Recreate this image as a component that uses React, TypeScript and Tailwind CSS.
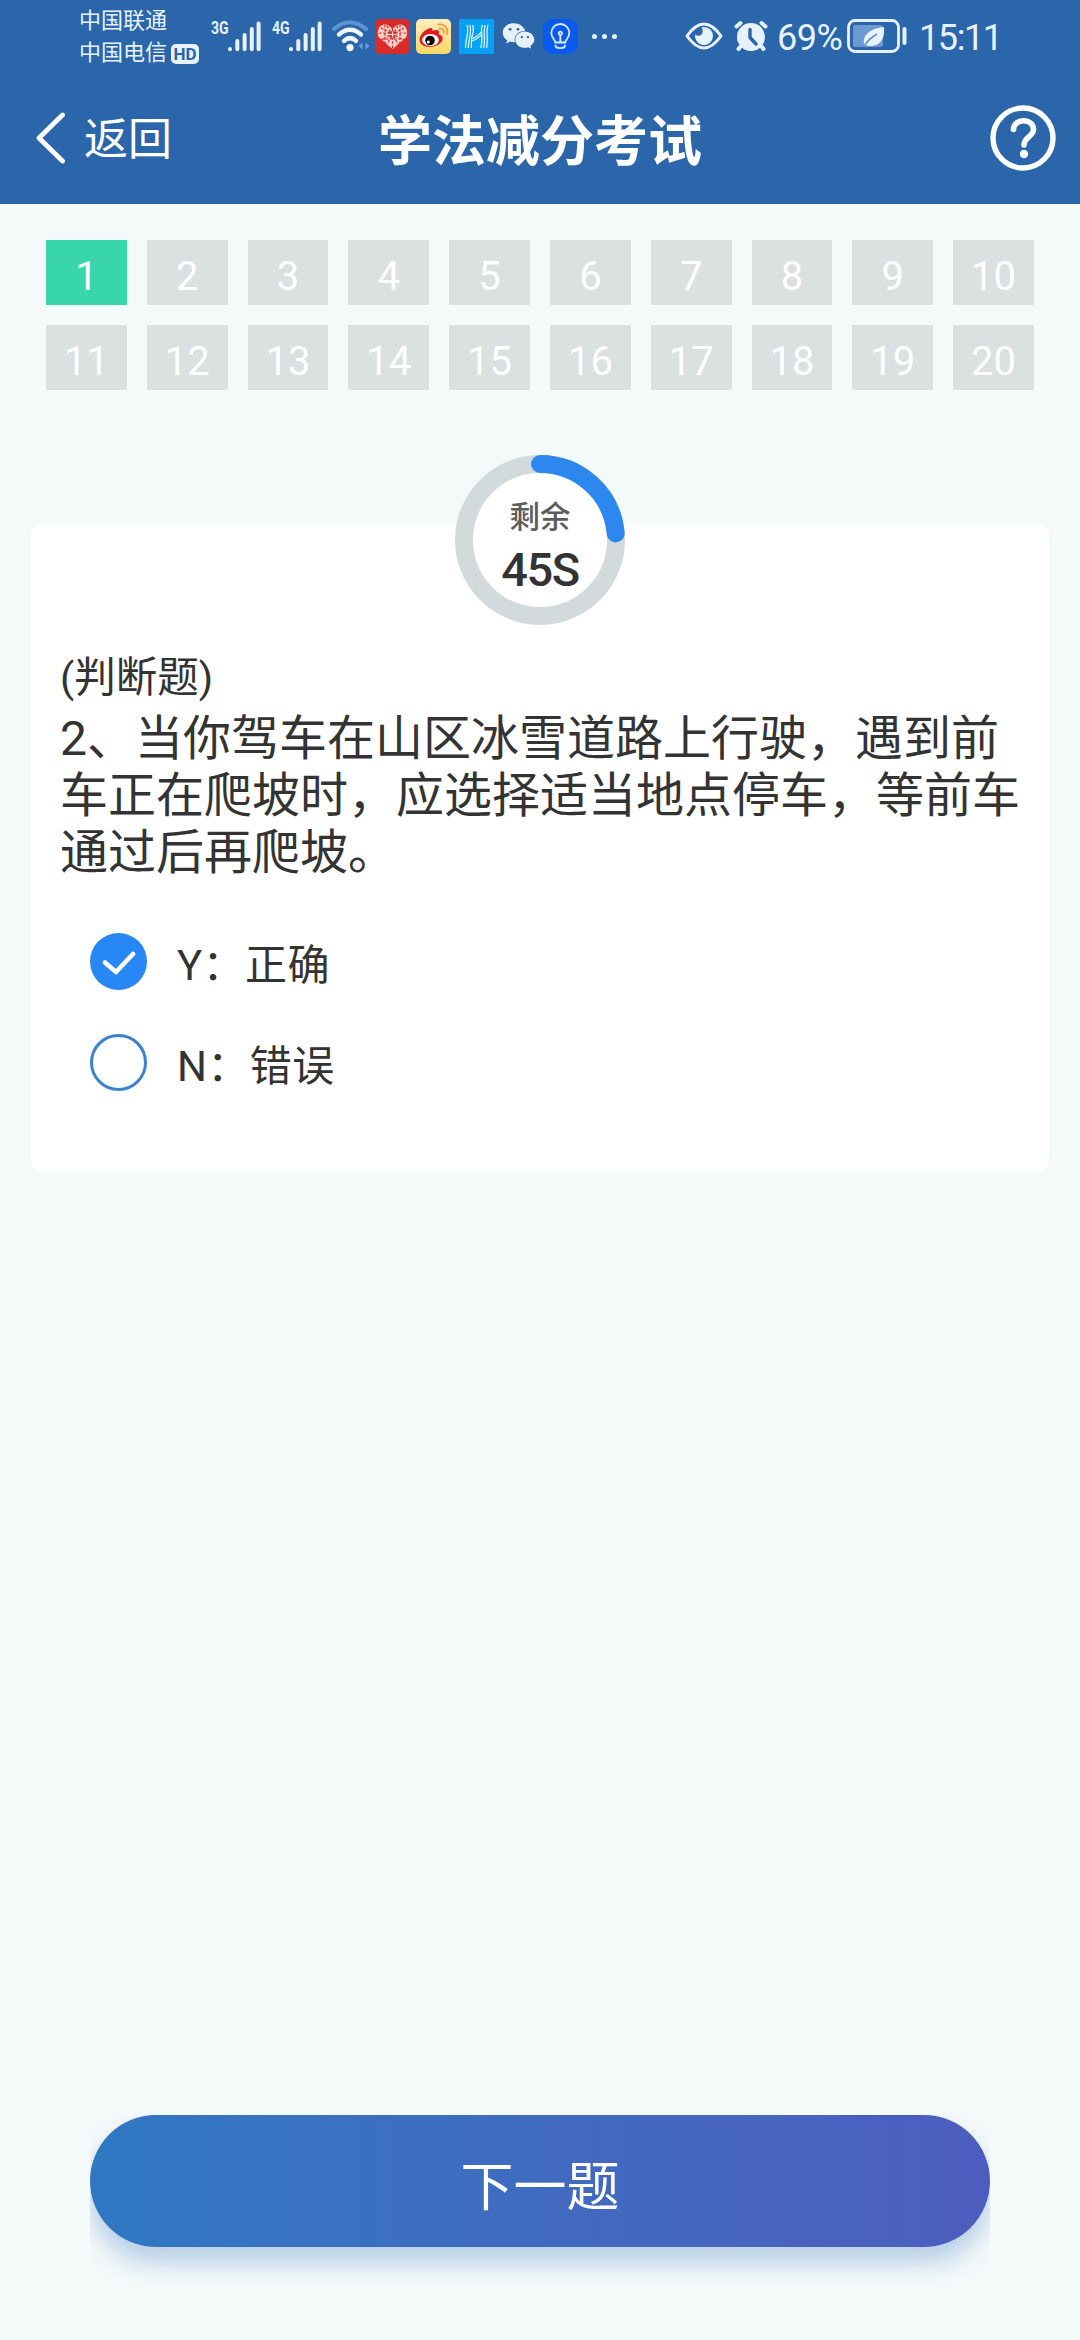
import React from "react";
import { FaWeixin } from "react-icons/fa";

const TOTAL = 20;
const CURRENT = 1;

function SignalBars() {
  return (
    <svg className="block h-[31px] w-[33px]" viewBox="0 0 33 31" fill="none" stroke="#e6f3ff" strokeWidth="4" strokeLinecap="round">
      <path d="M2 28v.2M9.3 20v8.2M16.6 14v14.2M23.8 8v20.2M30.6 2.6v25.6" />
    </svg>
  );
}

function Signal({ label }: { label: string }) {
  return (
    <div className="flex h-[31px] items-start">
      <span className="w-[17px] origin-left scale-x-[0.74] font-[Roboto] text-[19px] leading-[14px] font-bold whitespace-nowrap text-[#e6f3ff]">
        {label}
      </span>
      <SignalBars />
    </div>
  );
}

function WifiIcon() {
  return (
    <svg className="ml-[10px] h-[32px] w-[38px]" viewBox="0 0 38 32" fill="none" strokeLinecap="round">
      <path d="M2 9Q18 -4.5 34 9" stroke="#5f94d2" strokeWidth="4" />
      <path d="M7 14.5Q18 5 29 14.5" stroke="#f0f8ff" strokeWidth="4.4" />
      <path d="M12 20.8Q18 15.4 24 20.8" stroke="#f0f8ff" strokeWidth="4.4" />
      <circle cx="18" cy="27.6" r="3.6" fill="#f0f8ff" />
      <path d="M30.5 22.5v7l-4-3.5zM33.5 22.500v7l4-3.500z" fill="#6f9fd6" />
    </svg>
  );
}

function HeartIcon() {
  return (
    <svg className="ml-[5px] h-[35px] w-[35px]" viewBox="0 0 35 35">
      <rect width="35" height="35" rx="5" fill="#d92b2a" />
      <path
        d="M17.500 30L4 18.500C1.500 14 3 6.500 9 5.500c4 0 7 2 8.500 5 1.500-3 4.500-5 8.500-5 6 1 7.500 8.500 5 13z"
        fill="#f8cfcb"
      />
      <path
        d="M6 9l23 12M29 9L6 21M10 6v18M25 6v18M17.500 10v20M4 14h27M7 20h21M12 7l11 18M23 7L12 25"
        stroke="#d22524"
        strokeWidth="1.200"
        strokeDasharray="2.500 1.600"
      />
      <circle cx="17.500" cy="15.500" r="3.400" fill="#d92b2a" />
      <path d="M14.500 15.500h6M17.500 12.500v6" stroke="#fbe3e0" strokeWidth="1.200" />
    </svg>
  );
}

function WeiboIcon() {
  return (
    <svg className="ml-[6px] h-[35px] w-[35px]" viewBox="0 0 35 35">
      <defs>
        <linearGradient id="weibo" x1="0" y1="0" x2="0" y2="1">
          <stop offset="0" stopColor="#fdeebd" />
          <stop offset="1" stopColor="#f7d766" />
        </linearGradient>
      </defs>
      <rect width="35" height="35" rx="5" fill="url(#weibo)" />
      <path
        d="M14.500 9c2-.500 2.500 1.500 2 3 2.500-1.200 6-1.500 6.500.500.300 1-.200 1.800-.300 2.500 3 1 4.300 3 4 5-.600 4.500-6.500 7.800-13 7.800S3.500 25 3.500 20.500C3.500 16 9.500 9.500 14.500 9z"
        fill="#df2021"
      />
      <ellipse cx="14.500" cy="21" rx="8.300" ry="6" fill="#fff" />
      <circle cx="14" cy="21.500" r="4.800" fill="#080808" />
      <circle cx="12.300" cy="23" r="1.500" fill="#fff" />
      <path d="M22.500 5.500C28 4.500 32.500 9 31 15M23.500 9.500c3-.500 5 2 4.300 4.500" fill="none" stroke="#eda43c" strokeWidth="2" strokeLinecap="round" />
    </svg>
  );
}

function RoadIcon() {
  return (
    <svg className="ml-[8px] h-[35px] w-[35px]" viewBox="0 0 35 35">
      <rect width="35" height="35" rx="1" fill="#07a0f3" />
      <g fill="none" stroke="#eafaff" strokeWidth="1.200">
        <path d="M8 6c2.500 7-1.500 14-1.500 23M10.800 6c2.500 7-1.500 14-1.500 23M13.600 6c2 5 .200 8-.800 12-.500 4-.500 7-.500 11" />
        <path d="M29 6c-2.500 8 .5 15-1.500 23M26.200 6c-2.500 8 .5 15-1.500 23M23.400 6c-2 5-.5 8-.5 12s0 7-1 11" />
        <path d="M12.500 19.500c5-1 6-3 10-6.500M12.500 22c5-1 7-4 10.500-6.500" />
      </g>
    </svg>
  );
}

function BulbIcon() {
  return (
    <svg className="ml-[8px] h-[35px] w-[35px]" viewBox="0 0 35 35">
      <rect width="35" height="35" rx="10" fill="#0a5af0" />
      <g fill="none" stroke="#d9eeff" strokeWidth="1.800" strokeLinecap="round" strokeLinejoin="round">
        <path d="M12.300 23.500c0-3-4-4-4-9.500a9 9 0 0 1 18 0c0 5.500-4 6.500-4 9.500z" />
        <path d="M12.500 26.500c0 3.500 9.500 3.500 9.500 0M17.300 23v-7" />
        <circle cx="17.300" cy="14.300" r="1.600" />
      </g>
    </svg>
  );
}

function EyeIcon() {
  return (
    <svg className="h-[28px] w-[38px]" viewBox="0 0 38 28">
      <path d="M2 14Q19-10 36 14Q19 38 2 14z" fill="none" stroke="#e6f3ff" strokeWidth="3" strokeLinejoin="round" />
      <path d="M19 5a9 9 0 1 1-8.800 7.200c1.500 1.600 4.200 2.200 6 .6 2.200-2 2-5 .3-7.400A9 9 0 0 1 19 5z" fill="#e6f3ff" />
    </svg>
  );
}

function AlarmIcon() {
  return (
    <svg className="ml-[11px] h-[32px] w-[34px]" viewBox="0 0 34 32">
      <g stroke="#e6f3ff" strokeWidth="4" strokeLinecap="round">
        <path d="M2.500 6.500l4-3.500M31.500 6.500l-4-3.500M6 27l-1.500 2M28 27l1.500 2" />
      </g>
      <circle cx="17" cy="17" r="14" fill="#e6f3ff" />
      <path d="M16 9.500v8l6 6.500" fill="none" stroke="#2b65aa" strokeWidth="3.400" strokeLinecap="round" strokeLinejoin="round" />
    </svg>
  );
}

function BatteryIcon() {
  return (
    <svg className="ml-[7px] h-[34px] w-[60px]" viewBox="0 0 60 34">
      <rect x="6" y="6" width="30" height="22" rx="2" fill="#6b9ad0" />
      <rect x="1.500" y="1.500" width="50" height="31" rx="6.500" fill="none" stroke="#e6f3ff" strokeWidth="2.800" />
      <path d="M57.500 10v14" stroke="#e6f3ff" strokeWidth="4" strokeLinecap="round" />
      <path d="M37 8c1 9-2 18-12 19-3 .3-5-.4-5.500-.800L17.500 27C15 18 20 10 37 8z" fill="#e6f3ff" />
      <path d="M17 27.500C20 22 24 18.500 30 15" fill="none" stroke="#5f90c8" strokeWidth="1.600" />
    </svg>
  );
}

function StatusBar() {
  return (
    <div className="flex h-[72px] items-center pl-[79px] text-[#e6f3ff]">
      <div className="w-[121px] pt-[2px] text-[22px] leading-[32px]">
        <div>中国联通</div>
        <div className="flex items-center gap-[4px]">
          中国电信
          <span className="mt-[2px] flex h-[20px] w-[28px] items-center justify-center rounded-[5px] bg-[#e6f3ff] font-[Roboto] text-[17px] leading-none font-bold text-[#2b65aa]">
            HD
          </span>
        </div>
      </div>
      <div className="ml-[11px] flex gap-[11px]">
        <Signal label="3G" />
        <Signal label="4G" />
      </div>
      <WifiIcon />
      <HeartIcon />
      <WeiboIcon />
      <RoadIcon />
      <FaWeixin className="ml-[8px] h-[32px] w-[33px] text-[#e6f3ff]" />
      <BulbIcon />
      <div className="ml-[14px] flex gap-[5px]">
        <i className="size-[5px] rounded-full bg-[#e6f3ff]" />
        <i className="size-[5px] rounded-full bg-[#e6f3ff]" />
        <i className="size-[5px] rounded-full bg-[#e6f3ff]" />
      </div>
      <div className="ml-auto flex items-center pr-[79px]">
        <EyeIcon />
        <AlarmIcon />
        <span className="ml-[9px] w-[63px] pt-[4px] text-[36px] leading-[36px] tracking-[-0.500px]">69%</span>
        <BatteryIcon />
        <span className="ml-[12px] w-[82px] pt-[4px] text-[36px] leading-[36px] tracking-[-1.400px]">15:11</span>
      </div>
    </div>
  );
}

function NavBar() {
  return (
    <div className="grid h-[132px] grid-cols-[1fr_auto_1fr] items-center px-[24px] pb-[1px] text-white">
      <div className="flex items-center pl-[11px]">
        <svg className="h-[52px] w-[31px]" viewBox="0 0 31 52" fill="none" stroke="currentColor" strokeWidth="4.800" strokeLinecap="round" strokeLinejoin="round">
          <path d="M27.500 3L4 26 27.500 49" />
        </svg>
        <span className="ml-[18px] pt-[4px] text-[44px] leading-[52px]">返回</span>
      </div>
      <h1 className="pt-[10px] text-[54px] leading-[64px] font-bold">学法减分考试</h1>
      <svg className="h-[66px] w-[66px] justify-self-end" viewBox="0 0 66 66" fill="none" stroke="currentColor">
        <circle cx="33" cy="33" r="30" strokeWidth="5.400" />
        <path d="M23.500 24.500C24 12.500 44 13 43.500 25c-.3 6.500-9.500 7-9.500 15" strokeWidth="5.600" strokeLinecap="round" />
        <circle cx="34" cy="49" r="4.200" fill="currentColor" stroke="none" />
      </svg>
    </div>
  );
}

function CountdownRing() {
  return (
    <div className="relative size-[170px]">
      <svg className="absolute inset-0 size-full" viewBox="0 0 170 170" fill="none" strokeWidth="18">
        <circle cx="85" cy="85" r="76" fill="#fff" stroke="#d2dadb" />
        <path d="M85 9A76 76 0 0 1 160.700 78.400" stroke="#2c88ee" strokeLinecap="round" />
      </svg>
      <div className="relative flex flex-col items-center pt-[44px]">
        <span className="text-[30.500px] leading-[38px] font-medium text-[#5c5c5c]">剩余</span>
        <span className="mt-[8px] text-[47px] leading-[50px] font-medium tracking-[-1.500px] text-[#333]">45S</span>
      </div>
    </div>
  );
}

function Option({ label, checked = false }: { label: string; checked?: boolean }) {
  return (
    <div className="flex h-[57px] items-center">
      {checked ? (
        <span className="flex size-[57px] items-center justify-center rounded-full bg-[#2787f5]">
          <svg className="h-[26px] w-[34px]" viewBox="0 0 34 26" fill="none" stroke="#fff" strokeWidth="4.600" strokeLinecap="round" strokeLinejoin="round">
            <path d="M3 13.500L14 23 31 5" />
          </svg>
        </span>
      ) : (
        <span className="size-[57px] rounded-full border-[3px] border-[#3b82d0]" />
      )}
      <span className="ml-[30px] pt-[9px] text-[42px] leading-[54px] tracking-[0.400px] text-[#333]">{label}</span>
    </div>
  );
}

export default function App() {
  return (
    <div className="flex h-[2340px] w-[1080px] flex-col bg-[#f4f9fa] font-['Roboto','Noto_Sans_CJK_SC',sans-serif]" lang="zh-CN">
      <header className="bg-[#2b65aa]">
        <StatusBar />
        <NavBar />
      </header>

      <div className="grid grid-cols-10 gap-[20px] px-[46px] pt-[36px]">
        {Array.from({ length: TOTAL }, (_, i) => i + 1).map((n) => (
          <div
            key={n}
            className={`flex h-[65px] items-center justify-center pt-[8px] text-[40px] leading-none text-white ${
              n === CURRENT ? "bg-[#39d6ab]" : "bg-[#dbe0e0]"
            }`}
          >
            {n}
          </div>
        ))}
      </div>

      <main className="mx-[31px] mt-[134px] flex h-[648px] flex-col rounded-[10px] bg-white px-[29px]">
        <div className="-mt-[69px] self-center">
          <CountdownRing />
        </div>
        <div className="mt-[26px] text-[41.500px] leading-[54px] text-[#333]">(判断题)</div>
        <p className="mt-[5px] w-[965px] text-[48px] leading-[57px] text-[#333]">
          2、当你驾车在山区冰雪道路上行驶，遇到前车正在爬坡时，应选择适当地点停车，等前车通过后再爬坡。
        </p>
        <div className="mt-[52px] flex flex-col gap-[44px] pl-[30px]">
          <Option label="Y：正确" checked />
          <Option label="N：错误" />
        </div>
      </main>

      <div className="mx-[90px] mt-auto mb-[43px] overflow-hidden pb-[50px]">
        <button className="flex h-[132px] w-full items-center justify-center rounded-full bg-linear-to-r from-[#2f78c1] to-[#4c5dbe] pt-[14px] text-[53px] leading-none text-white shadow-[0_16px_24px_rgba(43,108,184,0.3)]">
          下一题
        </button>
      </div>
    </div>
  );
}
